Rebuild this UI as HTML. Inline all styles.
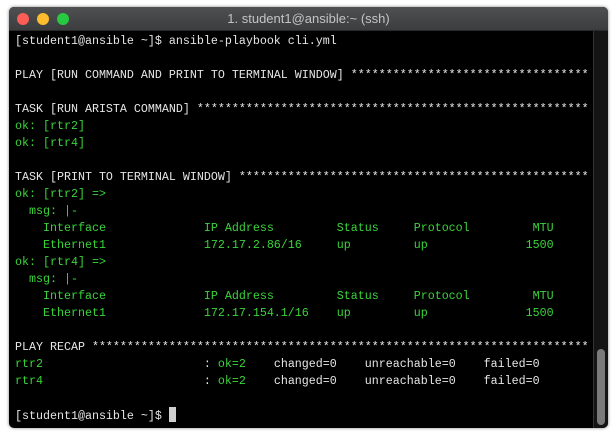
<!DOCTYPE html>
<html><head><meta charset="utf-8"><style>
html,body{margin:0;padding:0;background:#fff;width:616px;height:432px;overflow:hidden}
.win{position:absolute;left:9px;top:7px;width:599px;height:421px;background:#000;border-radius:5px;overflow:hidden;box-shadow:0 0 3px rgba(0,0,0,.5)}
.tb{position:absolute;left:0;top:0;right:0;height:23px;background:linear-gradient(#4f5052,#3c3d3f);border-bottom:1px solid #2a2a2a}
.tb .t{position:absolute;left:0;right:0;top:4px;text-align:center;color:#c4c4c4;font:13px "Liberation Sans",sans-serif}
.d{position:absolute;top:6px;width:12px;height:12px;border-radius:50%}
.sb{position:absolute;right:0;top:24px;width:14px;bottom:0;background:#141414;border-left:1px solid #333}
.th{position:absolute;right:3px;width:8px;top:318px;height:76px;border-radius:4px;background:#7a7a7a}
pre{position:absolute;left:6px;top:26px;margin:0;font:11.67px/17px "Liberation Mono",monospace;color:#e6e6e6}
.g{color:#3ad33a}
.c{display:inline-block;width:7px;height:15px;background:#cfcfcf;vertical-align:-3px}
</style></head><body>
<div class="win">
<div class="tb"><div class="d" style="left:8px;background:#fd5d57"></div><div class="d" style="left:28px;background:#fdbc2e"></div><div class="d" style="left:48px;background:#29c841"></div><div class="t">1. student1@ansible:~ (ssh)</div></div>
<div class="sb"><div class="th"></div></div>
<pre>[student1@ansible ~]$ ansible-playbook cli.yml

PLAY [RUN COMMAND AND PRINT TO TERMINAL WINDOW] **********************************

TASK [RUN ARISTA COMMAND] ********************************************************
<span class="g">ok: [rtr2]
ok: [rtr4]</span>

TASK [PRINT TO TERMINAL WINDOW] **************************************************
<span class="g">ok: [rtr2] =&gt;
  msg: |-
    Interface              IP Address         Status     Protocol         MTU
    Ethernet1              172.17.2.86/16     up         up              1500
ok: [rtr4] =&gt;
  msg: |-
    Interface              IP Address         Status     Protocol         MTU
    Ethernet1              172.17.154.1/16    up         up              1500</span>

PLAY RECAP ***********************************************************************
<span class="g">rtr2</span>                       : <span class="g">ok=2</span>    changed=0    unreachable=0    failed=0
<span class="g">rtr4</span>                       : <span class="g">ok=2</span>    changed=0    unreachable=0    failed=0

[student1@ansible ~]$ <span class="c"></span></pre>
</div>
</body></html>
